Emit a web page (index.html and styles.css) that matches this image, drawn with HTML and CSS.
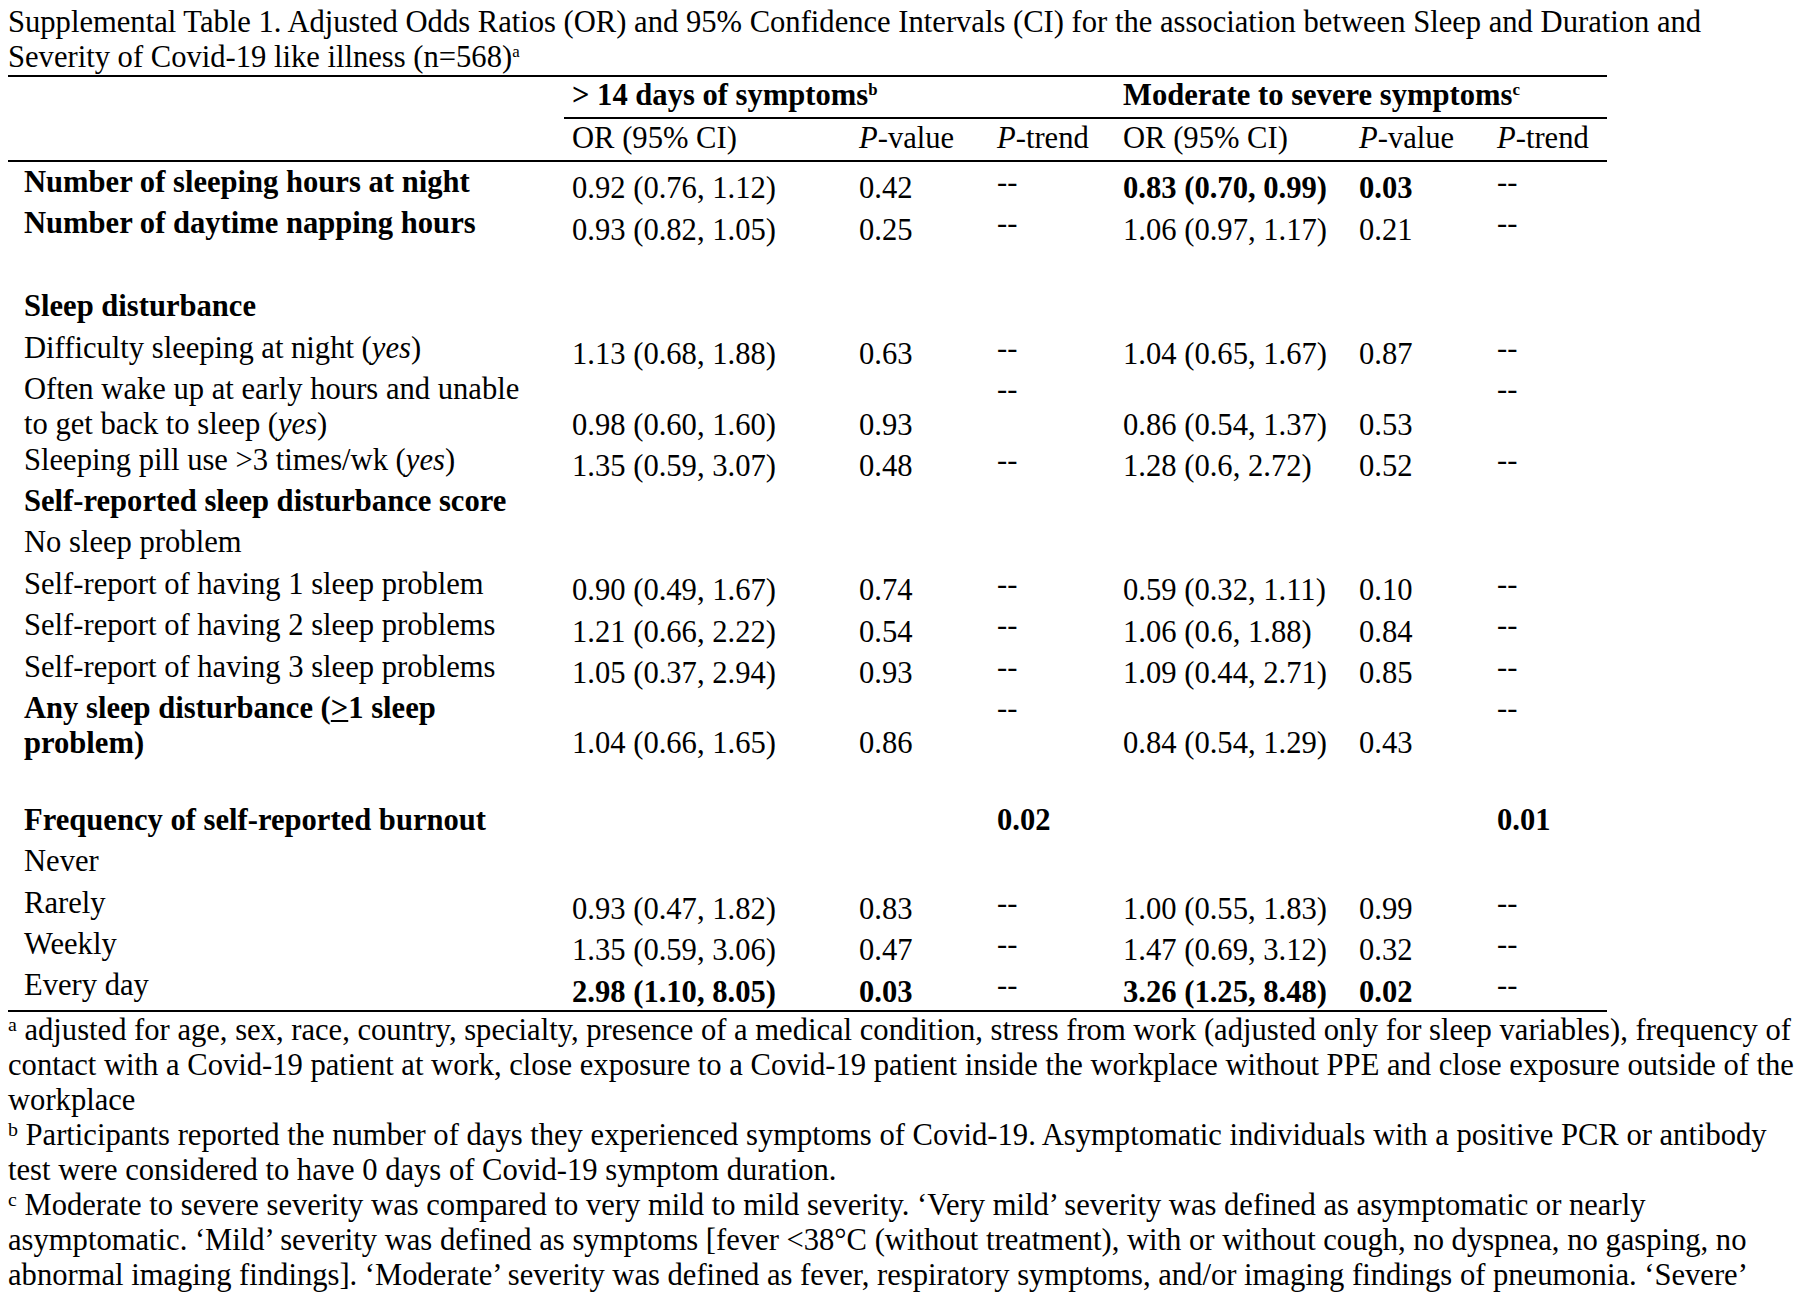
FILE: index.html
```html
<!DOCTYPE html>
<html lang="en">
<head>
<meta charset="utf-8">
<title>Supplemental Table 1</title>
<link rel="stylesheet" href="styles.css">
</head>
<body>
<p class="caption">Supplemental Table 1. Adjusted Odds Ratios (OR) and 95% Confidence Intervals (CI) for the association between Sleep and Duration and Severity of Covid-19 like illness (n=568)<sup class="sm">a</sup></p>
<table class="tbl">
  <colgroup>
    <col class="c-label">
    <col class="c-or1">
    <col class="c-p1">
    <col class="c-t1">
    <col class="c-or2">
    <col class="c-p2">
    <col class="c-t2">
  </colgroup>
  <thead>
    <tr class="h1">
      <th class="lbl"></th>
      <th class="grp" colspan="3">&gt; 14 days of symptoms<sup class="sm">b</sup></th>
      <th class="grp" colspan="3">Moderate to severe symptoms<sup class="sm">c</sup></th>
    </tr>
    <tr class="h2">
      <th class="lbl"></th>
      <th>OR (95% CI)</th>
      <th><i>P</i>-value</th>
      <th><i>P</i>-trend</th>
      <th>OR (95% CI)</th>
      <th><i>P</i>-value</th>
      <th><i>P</i>-trend</th>
    </tr>
  </thead>
  <tbody>
    <tr class="first">
      <td class="lbl b">Number of sleeping hours at night</td>
      <td class="v">0.92 (0.76, 1.12)</td><td class="v">0.42</td><td class="t">--</td>
      <td class="v b">0.83 (0.70, 0.99)</td><td class="v b">0.03</td><td class="t">--</td>
    </tr>
    <tr>
      <td class="lbl b">Number of daytime napping hours</td>
      <td class="v">0.93 (0.82, 1.05)</td><td class="v">0.25</td><td class="t">--</td>
      <td class="v">1.06 (0.97, 1.17)</td><td class="v">0.21</td><td class="t">--</td>
    </tr>
    <tr class="blank"><td colspan="7"></td></tr>
    <tr>
      <td class="lbl b">Sleep disturbance</td>
      <td class="v"></td><td class="v"></td><td class="t"></td><td class="v"></td><td class="v"></td><td class="t"></td>
    </tr>
    <tr>
      <td class="lbl">Difficulty sleeping at night (<i>yes</i>)</td>
      <td class="v">1.13 (0.68, 1.88)</td><td class="v">0.63</td><td class="t">--</td>
      <td class="v">1.04 (0.65, 1.67)</td><td class="v">0.87</td><td class="t">--</td>
    </tr>
    <tr class="two">
      <td class="lbl">Often wake up at early hours and unable<br>to get back to sleep (<i>yes</i>)</td>
      <td class="v">0.98 (0.60, 1.60)</td><td class="v">0.93</td><td class="t">--</td>
      <td class="v">0.86 (0.54, 1.37)</td><td class="v">0.53</td><td class="t">--</td>
    </tr>
    <tr>
      <td class="lbl">Sleeping pill use &gt;3 times/wk (<i>yes</i>)</td>
      <td class="v">1.35 (0.59, 3.07)</td><td class="v">0.48</td><td class="t">--</td>
      <td class="v">1.28 (0.6, 2.72)</td><td class="v">0.52</td><td class="t">--</td>
    </tr>
    <tr>
      <td class="lbl b">Self-reported sleep disturbance score</td>
      <td class="v"></td><td class="v"></td><td class="t"></td><td class="v"></td><td class="v"></td><td class="t"></td>
    </tr>
    <tr>
      <td class="lbl">No sleep problem</td>
      <td class="v"></td><td class="v"></td><td class="t"></td><td class="v"></td><td class="v"></td><td class="t"></td>
    </tr>
    <tr>
      <td class="lbl">Self-report of having 1 sleep problem</td>
      <td class="v">0.90 (0.49, 1.67)</td><td class="v">0.74</td><td class="t">--</td>
      <td class="v">0.59 (0.32, 1.11)</td><td class="v">0.10</td><td class="t">--</td>
    </tr>
    <tr>
      <td class="lbl">Self-report of having 2 sleep problems</td>
      <td class="v">1.21 (0.66, 2.22)</td><td class="v">0.54</td><td class="t">--</td>
      <td class="v">1.06 (0.6, 1.88)</td><td class="v">0.84</td><td class="t">--</td>
    </tr>
    <tr>
      <td class="lbl">Self-report of having 3 sleep problems</td>
      <td class="v">1.05 (0.37, 2.94)</td><td class="v">0.93</td><td class="t">--</td>
      <td class="v">1.09 (0.44, 2.71)</td><td class="v">0.85</td><td class="t">--</td>
    </tr>
    <tr class="two">
      <td class="lbl b">Any sleep disturbance (<span class="ul">&gt;</span>1 sleep<br>problem)</td>
      <td class="v">1.04 (0.66, 1.65)</td><td class="v">0.86</td><td class="t">--</td>
      <td class="v">0.84 (0.54, 1.29)</td><td class="v">0.43</td><td class="t">--</td>
    </tr>
    <tr class="blank"><td colspan="7"></td></tr>
    <tr>
      <td class="lbl b">Frequency of self-reported burnout</td>
      <td class="v"></td><td class="v"></td><td class="t b">0.02</td>
      <td class="v"></td><td class="v"></td><td class="t b">0.01</td>
    </tr>
    <tr>
      <td class="lbl">Never</td>
      <td class="v"></td><td class="v"></td><td class="t"></td><td class="v"></td><td class="v"></td><td class="t"></td>
    </tr>
    <tr>
      <td class="lbl">Rarely</td>
      <td class="v">0.93 (0.47, 1.82)</td><td class="v">0.83</td><td class="t">--</td>
      <td class="v">1.00 (0.55, 1.83)</td><td class="v">0.99</td><td class="t">--</td>
    </tr>
    <tr>
      <td class="lbl">Weekly</td>
      <td class="v">1.35 (0.59, 3.06)</td><td class="v">0.47</td><td class="t">--</td>
      <td class="v">1.47 (0.69, 3.12)</td><td class="v">0.32</td><td class="t">--</td>
    </tr>
    <tr class="last">
      <td class="lbl">Every day</td>
      <td class="v b">2.98 (1.10, 8.05)</td><td class="v b">0.03</td><td class="t">--</td>
      <td class="v b">3.26 (1.25, 8.48)</td><td class="v b">0.02</td><td class="t">--</td>
    </tr>
  </tbody>
</table>
<div class="notes">
  <p><sup class="fn">a</sup> adjusted for age, sex, race, country, specialty, presence of a medical condition, stress from work (adjusted only for sleep variables), frequency of contact with a Covid-19 patient at work, close exposure to a Covid-19 patient inside the workplace without PPE and close exposure outside of the workplace</p>
  <p><sup class="fn">b</sup> Participants reported the number of days they experienced symptoms of Covid-19. Asymptomatic individuals with a positive PCR or antibody test were considered to have 0 days of Covid-19 symptom duration.</p>
  <p><sup class="fn">c</sup> Moderate to severe severity was compared to very mild to mild severity. ‘Very mild’ severity was defined as asymptomatic or nearly asymptomatic. ‘Mild’ severity was defined as symptoms [fever &lt;38°C (without treatment), with or without cough, no dyspnea, no gasping, no abnormal imaging findings]. ‘Moderate’ severity was defined as fever, respiratory symptoms, and/or imaging findings of pneumonia. ‘Severe’</p>
</div>
</body>
</html>
```

FILE: styles.css
```css
html, body {
  background: #ffffff;
}

body {
  margin: 0;
  padding: 5px 8px 0;
  color: #000000;
  font-family: "Liberation Serif", "Times New Roman", serif;
  font-size: 30.6px;
  line-height: 35px;
}

.caption {
  margin: 0;
}

sup.sm {
  font-size: 0.55em;
  line-height: 0;
  vertical-align: 0.6em;
}

sup.fn {
  font-size: 0.65em;
  line-height: 0;
  vertical-align: 0.45em;
}

.tbl {
  width: 1599px;
  table-layout: fixed;
  border-collapse: separate;
  border-spacing: 0;
  border-top: 2px solid #000;
  border-bottom: 2px solid #000;
}

.c-label { width: 556px; }
.c-or1 { width: 287px; }
.c-p1 { width: 138px; }
.c-t1 { width: 126px; }
.c-or2 { width: 236px; }
.c-p2 { width: 138px; }
.c-t2 { width: 118px; }

.tbl th,
.tbl td {
  padding: 0 0 0 8px;
  text-align: left;
  white-space: nowrap;
  font-weight: normal;
}

.tbl th.lbl,
.tbl td.lbl {
  padding-left: 16px;
}

.h1 th {
  padding-top: 1px;
  padding-bottom: 4px;
  font-weight: bold;
}

.h1 th.grp {
  border-bottom: 2px solid #000;
}

.h2 th {
  padding-top: 2px;
  padding-bottom: 4px;
  border-bottom: 2px solid #000;
}

.tbl tbody tr {
  height: 41.4px;
}

.tbl tbody tr.first {
  height: 44.4px;
}

.tbl tbody tr.two {
  height: 70.6px;
}

.tbl td.lbl,
.tbl td.t {
  vertical-align: top;
}

.tbl td.v {
  vertical-align: bottom;
}

.tbl tr.first td.lbl,
.tbl tr.first td.t {
  padding-top: 3px;
}

.tbl .b {
  font-weight: bold;
}

.ul {
  text-decoration: underline;
  text-decoration-thickness: 2px;
  text-underline-offset: 2px;
}

.notes {
  margin-top: 1px;
}

.notes p {
  margin: 0;
}
```
